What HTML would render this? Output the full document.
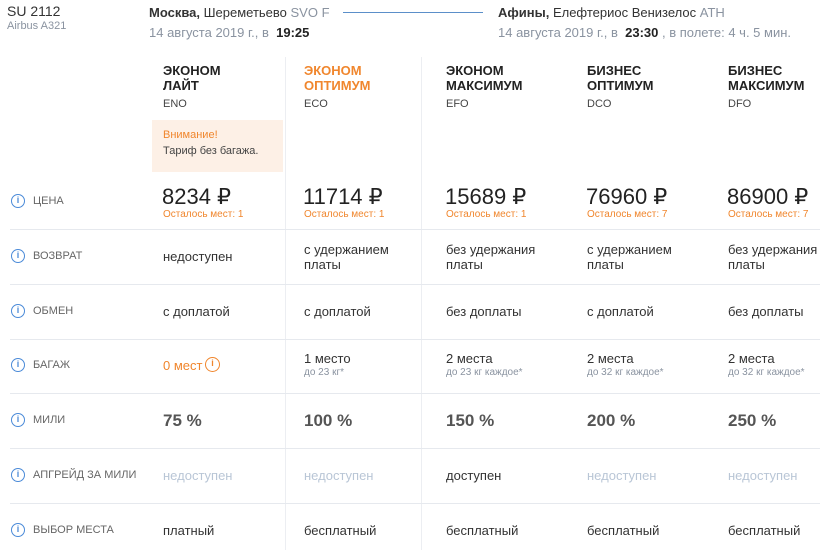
<!DOCTYPE html>
<html><head><meta charset="utf-8"><style>
*{margin:0;padding:0;box-sizing:border-box}
body{width:820px;height:550px;overflow:hidden;background:#fff;font-family:"Liberation Sans",sans-serif;color:#333;position:relative;font-size:13px}
.a{position:absolute;white-space:nowrap}
.g{color:#8a93a0}
.o{color:#f0862d}
.t{font-weight:bold;font-size:13px;line-height:15px;color:#222}
.code{font-size:11px;color:#444}
.pr{font-size:22px;color:#222}
.left{font-size:10px;color:#f0862d}
.hl{position:absolute;left:10px;width:810px;height:1px;background:#e6e9ee}
.vl{position:absolute;width:1px;background:#eceef2}
.lab{font-size:11px;color:#666;text-transform:uppercase}
.ic{position:absolute;width:14px;height:14px;border:1.5px solid #4a8ad8;border-radius:50%;color:#4a8ad8;font-size:9px;font-weight:bold;text-align:center;line-height:11px}
.v{font-size:13px;line-height:15px;color:#333}
.s{font-size:10px;color:#8a93a0}
.m{font-size:17px;font-weight:bold;color:#555}
.na{color:#b9c6d6}
</style></head><body>
<div class="a" style="left:7px;top:3px;font-size:14px;color:#333">SU 2112</div>
<div class="a g" style="left:7px;top:20px;font-size:11px">Airbus A321</div>
<div class="a" style="left:149px;top:5px;font-size:13px"><b>Москва,</b> Шереметьево <span class="g">SVO F</span></div>
<div class="a g" style="left:149px;top:25px;font-size:13px">14 августа 2019 г., в &nbsp;<b style="color:#222">19:25</b></div>
<div class="a" style="left:343px;top:12px;width:140px;height:1px;background:#5b8fc9"></div>
<div class="a" style="left:498px;top:5px;font-size:13px"><b>Афины,</b> Елефтериос Венизелос <span class="g">ATH</span></div>
<div class="a g" style="left:498px;top:25px;font-size:13px">14 августа 2019 г., в &nbsp;<b style="color:#222">23:30</b> , в полете: 4 ч. 5 мин.</div>

<div class="vl" style="left:285px;top:57px;height:493px"></div>
<div class="vl" style="left:421px;top:57px;height:493px"></div>

<div class="a t" style="left:163px;top:63px">ЭКОНОМ<br>ЛАЙТ</div>
<div class="a t" style="left:304px;top:63px;color:#f0862d">ЭКОНОМ<br>ОПТИМУМ</div>
<div class="a t" style="left:446px;top:63px">ЭКОНОМ<br>МАКСИМУМ</div>
<div class="a t" style="left:587px;top:63px">БИЗНЕС<br>ОПТИМУМ</div>
<div class="a t" style="left:728px;top:63px">БИЗНЕС<br>МАКСИМУМ</div>
<div class="a code" style="left:163px;top:98px">ENO</div>
<div class="a code" style="left:304px;top:98px">ECO</div>
<div class="a code" style="left:446px;top:98px">EFO</div>
<div class="a code" style="left:587px;top:98px">DCO</div>
<div class="a code" style="left:728px;top:98px">DFO</div>
<div class="a" style="left:152px;top:120px;width:131px;height:52px;background:#fdf0e6"></div>
<div class="a o" style="left:163px;top:129px;font-size:11px">Внимание!</div>
<div class="a" style="left:163px;top:145px;font-size:11px;color:#444">Тариф без багажа.</div>

<!-- labels -->
<div class="ic" style="left:11px;top:194px">i</div><div class="a lab" style="left:33px;top:195px">Цена</div>
<div class="ic" style="left:11px;top:249px">i</div><div class="a lab" style="left:33px;top:250px">Возврат</div>
<div class="ic" style="left:11px;top:304px">i</div><div class="a lab" style="left:33px;top:305px">Обмен</div>
<div class="ic" style="left:11px;top:358px">i</div><div class="a lab" style="left:33px;top:359px">Багаж</div>
<div class="ic" style="left:11px;top:413px">i</div><div class="a lab" style="left:33px;top:414px">Мили</div>
<div class="ic" style="left:11px;top:468px">i</div><div class="a lab" style="left:33px;top:469px">Апгрейд за мили</div>
<div class="ic" style="left:11px;top:523px">i</div><div class="a lab" style="left:33px;top:524px">Выбор места</div>

<div class="hl" style="top:229px"></div>
<div class="hl" style="top:284px"></div>
<div class="hl" style="top:339px"></div>
<div class="hl" style="top:393px"></div>
<div class="hl" style="top:448px"></div>
<div class="hl" style="top:503px"></div>

<!-- prices -->
<div class="a pr" style="left:162px;top:184px">8234 ₽</div>
<div class="a pr" style="left:303px;top:184px">11714 ₽</div>
<div class="a pr" style="left:445px;top:184px">15689 ₽</div>
<div class="a pr" style="left:586px;top:184px">76960 ₽</div>
<div class="a pr" style="left:727px;top:184px">86900 ₽</div>
<div class="a left" style="left:163px;top:209px">Осталось мест: 1</div>
<div class="a left" style="left:304px;top:209px">Осталось мест: 1</div>
<div class="a left" style="left:446px;top:209px">Осталось мест: 1</div>
<div class="a left" style="left:587px;top:209px">Осталось мест: 7</div>
<div class="a left" style="left:728px;top:209px">Осталось мест: 7</div>

<!-- return -->
<div class="a v" style="left:163px;top:249px">недоступен</div>
<div class="a v" style="left:304px;top:242px">с удержанием<br>платы</div>
<div class="a v" style="left:446px;top:242px">без удержания<br>платы</div>
<div class="a v" style="left:587px;top:242px">с удержанием<br>платы</div>
<div class="a v" style="left:728px;top:242px">без удержания<br>платы</div>

<div class="a v" style="left:163px;top:304px">с доплатой</div>
<div class="a v" style="left:304px;top:304px">с доплатой</div>
<div class="a v" style="left:446px;top:304px">без доплаты</div>
<div class="a v" style="left:587px;top:304px">с доплатой</div>
<div class="a v" style="left:728px;top:304px">без доплаты</div>

<div class="a v o" style="left:163px;top:358px;color:#f0862d">0 мест</div>
<div class="ic" style="left:205px;top:357px;border-color:#f0862d;color:#f0862d;width:15px;height:15px">i</div>
<div class="a v" style="left:304px;top:351px">1 место</div><div class="a s" style="left:304px;top:367px">до 23 кг*</div>
<div class="a v" style="left:446px;top:351px">2 места</div><div class="a s" style="left:446px;top:367px">до 23 кг каждое*</div>
<div class="a v" style="left:587px;top:351px">2 места</div><div class="a s" style="left:587px;top:367px">до 32 кг каждое*</div>
<div class="a v" style="left:728px;top:351px">2 места</div><div class="a s" style="left:728px;top:367px">до 32 кг каждое*</div>

<div class="a m" style="left:163px;top:411px">75 %</div>
<div class="a m" style="left:304px;top:411px">100 %</div>
<div class="a m" style="left:446px;top:411px">150 %</div>
<div class="a m" style="left:587px;top:411px">200 %</div>
<div class="a m" style="left:728px;top:411px">250 %</div>

<div class="a v na" style="left:163px;top:468px">недоступен</div>
<div class="a v na" style="left:304px;top:468px">недоступен</div>
<div class="a v" style="left:446px;top:468px">доступен</div>
<div class="a v na" style="left:587px;top:468px">недоступен</div>
<div class="a v na" style="left:728px;top:468px">недоступен</div>

<div class="a v" style="left:163px;top:523px">платный</div>
<div class="a v" style="left:304px;top:523px">бесплатный</div>
<div class="a v" style="left:446px;top:523px">бесплатный</div>
<div class="a v" style="left:587px;top:523px">бесплатный</div>
<div class="a v" style="left:728px;top:523px">бесплатный</div>
</body></html>
